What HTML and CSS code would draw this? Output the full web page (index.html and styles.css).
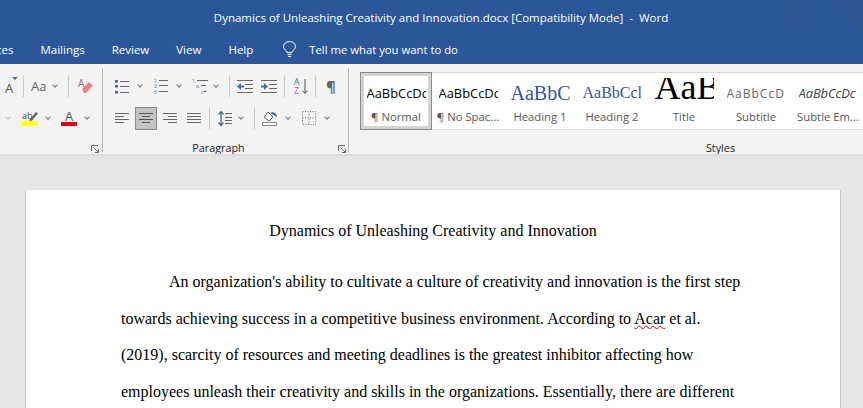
FILE: index.html
```html
<!DOCTYPE html>
<html lang="en">
<head>
<meta charset="utf-8">
<title>Word</title>
<link rel="stylesheet" href="styles.css">
</head>
<body>
<header class="titlebar">
  <div class="doc-title">Dynamics of Unleashing Creativity and Innovation.docx [Compatibility Mode]&nbsp; -&nbsp; Word</div>
  <svg class="deco" width="80" height="34" viewBox="0 0 80 34"><g fill="#2f5690"><rect x="0" y="0" width="3" height="15"/><rect x="5" y="0" width="3" height="19"/><rect x="10" y="0" width="3" height="24"/><rect x="15" y="0" width="3" height="26"/><rect x="21" y="0" width="4" height="32"/><rect x="27" y="0" width="3" height="24"/><rect x="32" y="0" width="3" height="17"/><path d="M50 0h5l3 14zM67 0h13v32c-8 0-13-4-13-12z"/></g></svg>
</header>
<nav class="tabs">
  <span class="tab tab-first">ces</span>
  <span class="tab">Mailings</span>
  <span class="tab">Review</span>
  <span class="tab">View</span>
  <span class="tab">Help</span>
  <svg class="bulb" width="13" height="17" viewBox="0 0 13 17" fill="none" stroke="#fff" stroke-width="1"><path d="M4 11.500C4 9.500 .5 8.500 .5 5.500a6 5 0 0 1 12 0c0 3-3.500 4-3.500 6z"/><path d="M4.500 13.500h4M5 15.500h3"/></svg>
  <span class="tell">Tell me what you want to do</span>
</nav>
<section class="ribbon">
  <div class="group font-group">
    <div class="row">
      <span class="grow-a">A<i class="tri"></i></span>
      <span class="vsep ml-5"></span>
      <span class="aa ml-7">Aa</span>
      <i class="chev ml-7"></i>
      <span class="vsep ml-10"></span>
      <svg class="ico ml-9" width="15" height="18" viewBox="0 0 15 18"><text x="0" y="10" class="eraser-a">A</text><path d="M4 12l7-7 4 3.500-7 7.500H6z" fill="#e9808f"/></svg>
    </div>
    <div class="row row-second">
      <i class="chev chev-pale ml-2"></i>
      <svg class="ico ml-11" width="16" height="15" viewBox="0 0 16 15"><text x="0" y="8" class="ab">ab</text><path d="M8 8l6-7 2 1.500-6 7-3 1z" fill="#666"/><rect x="0" y="10" width="16" height="5" fill="#ffff20"/></svg>
      <i class="chev ml-8"></i>
      <span class="color-a ml-10">A</span>
      <i class="chev ml-8"></i>
    </div>
    <svg class="launcher" width="8" height="8" viewBox="0 0 8 8" fill="none" stroke="#666"><path d="M.5 6V.5H7M2.500 2.500l4.500 4.500M7.500 4v3.500H4"/></svg>
  </div>
  <div class="group para-group">
    <div class="row">
      <svg class="ico" width="14" height="15" viewBox="0 0 14 15"><g fill="#3f6fa8"><rect x="0" y="1" width="3" height="2.500"/><rect x="0" y="6" width="3" height="2.500"/><rect x="0" y="12" width="3" height="2.500"/></g><path d="M5 2.500h9M5 7.500h9M5 13.500h9" stroke="#666"/></svg>
      <i class="chev ml-9"></i>
      <svg class="ico ml-11" width="14" height="16" viewBox="0 0 14 16"><text x="0" y="4.500" class="num">1</text><text x="0" y="10" class="num">2</text><text x="0" y="15.500" class="num">3</text><path d="M5 2.500h9M5 7.500h9M5 13.500h9" stroke="#666"/></svg>
      <i class="chev ml-9"></i>
      <svg class="ico ml-10" width="16" height="16" viewBox="0 0 16 16"><text x="0" y="4.500" class="num">1</text><text x="4" y="10" class="num">a</text><text x="9" y="15.500" class="num">i</text><path d="M5 2.500h11M9 7.500h5M11.500 13.500h3" stroke="#666"/></svg>
      <i class="chev ml-6"></i>
      <span class="vsep ml-10"></span>
      <svg class="ico ml-7" width="16" height="13" viewBox="0 0 16 13"><path d="M0 .5h16M8 4.500h8M8 8.500h8M0 12.500h16" stroke="#666"/><path d="M0 6.500l4-3.500v2.500h3v2H4v2.500z" fill="#3f6fa8"/></svg>
      <svg class="ico ml-8" width="16" height="13" viewBox="0 0 16 13"><path d="M0 .5h16M8 4.500h8M8 8.500h8M0 12.500h16" stroke="#666"/><path d="M7 6.500L3 3v2.500H0v2h3V10z" fill="#3f6fa8"/></svg>
      <span class="vsep ml-7"></span>
      <svg class="ico ml-9" width="14" height="16" viewBox="0 0 14 16"><text x="0" y="7" class="az az-a">A</text><text x="0" y="15.500" class="az az-z">Z</text><path d="M11 1v14M8.500 12.500L11 15.500l2.500-3" fill="none" stroke="#555"/></svg>
      <span class="vsep ml-7"></span>
      <span class="pilcrow ml-10">¶</span>
    </div>
    <div class="row row-second">
      <svg class="ico" width="14" height="11" viewBox="0 0 14 11"><path d="M0 .5h14M0 3.500h9M0 6.500h14M0 9.500h9" stroke="#666"/></svg>
      <span class="align-on ml-6"><svg width="14" height="11" viewBox="0 0 14 11"><path d="M0 .5h14M3 3.500h8M0 6.500h14M3 9.500h8" stroke="#555"/></svg></span>
      <svg class="ico ml-6" width="14" height="11" viewBox="0 0 14 11"><path d="M0 .5h14M5 3.500h9M0 6.500h14M5 9.500h9" stroke="#666"/></svg>
      <svg class="ico ml-10" width="14" height="11" viewBox="0 0 14 11"><path d="M0 .5h14M0 3.500h14M0 6.500h14M0 9.500h14" stroke="#666"/></svg>
      <span class="vsep ml-8"></span>
      <svg class="ico ml-8" width="14" height="15" viewBox="0 0 14 15"><path d="M3 0v15M.5 3.500L3 .5l2.500 3M.5 11.500L3 14.500l2.500-3" fill="none" stroke="#3f6fa8" stroke-width="1.300"/><path d="M7 2.500h7M7 6.500h7M7 9.500h7M7 12.500h7" stroke="#666"/></svg>
      <i class="chev ml-7"></i>
      <span class="vsep ml-10"></span>
      <svg class="ico ml-7" width="16" height="15" viewBox="0 0 16 15"><path d="M2 6l4-5 5 5-4 4z" fill="#fff" stroke="#666"/><path d="M8 2l3-1c3 1 4 3 4 5l-2-1z" fill="#3f6fa8"/><path d="M.5 11.500h14v3H.5z" fill="#fff" stroke="#888"/></svg>
      <i class="chev ml-8"></i>
      <svg class="ico ml-11" width="14" height="14" viewBox="0 0 14 14" fill="none" stroke="#777" stroke-dasharray="1 1.500"><path d="M.5.5h13v13H.5zM.5 7h13M7 .5v13"/></svg>
      <i class="chev ml-9"></i>
    </div>
    <div class="group-label para-label">Paragraph</div>
    <svg class="launcher launcher-para" width="8" height="8" viewBox="0 0 8 8" fill="none" stroke="#666"><path d="M.5 6V.5H7M2.500 2.500l4.500 4.500M7.500 4v3.500H4"/></svg>
  </div>
  <div class="group styles-group">
    <div class="gallery">
      <div class="style style-on"><span class="s-prev s-normal">AaBbCcDc</span><span class="s-name">¶ Normal</span></div>
      <div class="style"><span class="s-prev s-normal">AaBbCcDc</span><span class="s-name">¶ No Spac...</span></div>
      <div class="style"><span class="s-prev s-h1">AaBbC</span><span class="s-name">Heading 1</span></div>
      <div class="style"><span class="s-prev s-h2">AaBbCcl</span><span class="s-name">Heading 2</span></div>
      <div class="style"><span class="s-prev s-title">AaB</span><span class="s-name">Title</span></div>
      <div class="style"><span class="s-prev s-sub">AaBbCcD</span><span class="s-name">Subtitle</span></div>
      <div class="style"><span class="s-prev s-em">AaBbCcDc</span><span class="s-name">Subtle Em...</span></div>
    </div>
    <div class="group-label">Styles</div>
  </div>
</section>
<main class="canvas">
  <article class="page">
    <h1 class="doc-heading">Dynamics of Unleashing Creativity and Innovation</h1>
    <p class="body-text"><span class="indent"></span>An organization's ability to cultivate a culture of creativity and innovation is the first step<br>towards achieving success in a competitive business environment. According to <span class="squiggle">Acar</span> et al.<br>(2019), scarcity of resources and meeting deadlines is the greatest inhibitor affecting how<br>employees unleash their creativity and skills in the organizations. Essentially, there are different</p>
  </article>
</main>
</body>
</html>
```
FILE: styles.css
```css
* { box-sizing: border-box; }
html, body { margin: 0; height: 408px; overflow: hidden; }
body { width: 863px; font-family: "Open Sans", "Noto Sans", sans-serif; background: #e6e6e6; }
.titlebar { height: 34px; background: #2b579a; color: #fff; display: flex; align-items: center; justify-content: center; position: relative; padding-left: 19px; }
.doc-title { font-size: 11.500px; white-space: nowrap; }
.deco { position: absolute; right: 0; top: 0; }
.tabs { height: 30px; background: #2b579a; color: #fff; display: flex; align-items: center; font-size: 11.500px; overflow: hidden; }
.tab { margin-right: 27px; white-space: nowrap; }
.tab-first { margin-left: -4px; }
.bulb { margin: 0 13px 0 3px; flex: none; }
.tell { white-space: nowrap; font-size: 11.300px; }

.ribbon { height: 92px; background: #f3f3f3; display: flex; border-bottom: 2px solid #dcdcdc; overflow: hidden; padding-top: 4px; align-items: flex-start; }
.group { position: relative; height: 84px; flex: none; display: flex; flex-direction: column; padding-top: 6px; border-right: 1px solid #b9b9b9; }
.font-group { width: 103px; padding-left: 4px; }
.para-group { width: 246px; padding-left: 12px; }
.styles-group { width: 732px; padding-left: 11px; padding-top: 4px; border-right: 0; }
.row { display: flex; align-items: center; height: 24px; flex: none; }
.row-second { margin-top: 8px; }

.ml-2 { margin-left: 2px; }
.ml-5 { margin-left: 5px; }
.ml-6 { margin-left: 6px; }
.ml-7 { margin-left: 7px; }
.ml-8 { margin-left: 8px; }
.ml-9 { margin-left: 9px; }
.ml-10 { margin-left: 10px; }
.ml-11 { margin-left: 11px; }

.ico { flex: none; display: block; }
.chev { display: block; width: 4px; height: 4px; border-right: 1px solid #777; border-bottom: 1px solid #777; transform: rotate(45deg); flex: none; margin-top: -2px; margin-right: 1px; }
.chev-pale { border-color: #c4c4c4; }
.vsep { width: 1px; height: 21px; background: #c8c8c8; flex: none; }
.grow-a { position: relative; display: block; flex: none; width: 14px; padding-left: 1px; font-size: 13px; line-height: 1; color: #555; margin-top: 4px; }
.tri { position: absolute; left: 8px; top: -5px; border-left: 3px solid transparent; border-right: 3px solid transparent; border-top: 3px solid #3f6fa8; }
.aa { display: block; width: 15px; flex: none; font-size: 13px; color: #666; white-space: nowrap; }
.eraser-a { font: 10px "Open Sans", sans-serif; fill: #777; }
.ab { font: 9px "Open Sans", sans-serif; fill: #444; }
.color-a { display: block; flex: none; font-size: 13px; color: #555; width: 16px; height: 16px; line-height: 12px; text-align: center; border-bottom: 4px solid #e0000e; }
.num { font: 5px "Open Sans", sans-serif; fill: #3f6fa8; }
.az { font: 8.500px "Open Sans", sans-serif; }
.az-a { fill: #3f6fa8; }
.az-z { fill: #9a5bb0; }
.pilcrow { display: block; flex: none; color: #666; font-size: 15px; font-weight: 700; line-height: 15px; }
.align-on { width: 22px; height: 23px; background: #c3c3c3; border: 1px solid #8a8a8a; display: flex; align-items: center; justify-content: center; flex: none; }
.launcher { position: absolute; right: 3px; bottom: -1px; }
.launcher-para { right: 2px; }
.group-label { margin-top: auto; margin-bottom: -4px; text-align: center; font-size: 10.800px; color: #222; line-height: 16px; white-space: nowrap; }
.para-label { margin-left: -12px; padding-right: 14px; }

.gallery { display: flex; height: 58px; flex: none; background: #fff; border: 1px solid #d8d8d8; border-left: 0; border-right: 0; }
.style { width: 72px; flex: none; display: flex; flex-direction: column; align-items: center; padding-top: 5px; }
.style-on { margin: -1px 0; border: 1px solid #8a8a8a; box-shadow: inset 0 0 0 3px #d4d4d4; }
.s-prev { height: 30px; width: 59px; flex: none; display: flex; align-items: center; overflow: hidden; white-space: nowrap; color: #000; }
.s-normal { font: 12.900px "Open Sans", sans-serif; }
.s-h1 { font: 20px "Liberation Serif", serif; color: #2f5496; }
.s-h2 { font: 16px "Liberation Serif", serif; color: #2f5496; }
.s-title { font: 36px "Liberation Serif", serif; padding-bottom: 12px; }
.s-sub { font: 12px "Open Sans", sans-serif; color: #666; letter-spacing: 1px; }
.s-em { font: italic 12.800px "Open Sans", sans-serif; color: #404040; }
.s-name { font-size: 11.300px; color: #555; white-space: nowrap; line-height: 16px; margin-top: 1px; }

.canvas { height: 252px; background: #e6e6e6; padding: 34px 0 0 26px; overflow: hidden; }
.page { width: 814px; height: 300px; background: #fff; padding-top: 26px; font-family: "Liberation Serif", serif; color: #000; box-shadow: -1px 0 0 #cacaca, 1px 0 0 #cacaca; }
.doc-heading { margin: 0 0 18px; font-weight: 400; font-size: 16px; line-height: 30px; text-align: center; }
.body-text { margin: 0; padding-left: 95px; font-size: 16px; line-height: 36.600px; white-space: nowrap; }
.indent { display: inline-block; width: 48px; }
.squiggle { text-decoration: underline wavy #d00; text-decoration-thickness: 1px; }
```
